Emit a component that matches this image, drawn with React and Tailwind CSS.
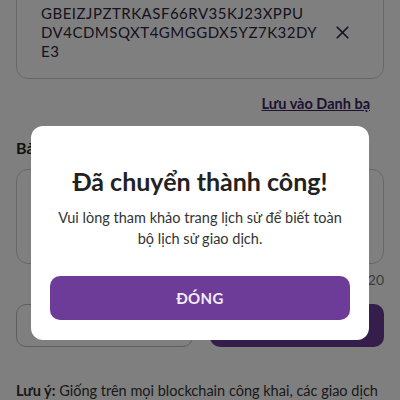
import React from 'react';
import { X } from 'lucide-react';

const font = { fontFamily: 'Lato, "Noto Sans", sans-serif' };

const SuccessModal = () => (
    <div className="fixed inset-0 bg-black/50 flex items-start justify-center">
        <div className="mt-[126px] w-[338px] bg-white rounded-[12px] pt-[39px] pb-[20px] px-[19px] flex flex-col items-center">
            <h2 className="text-[25px] leading-[32px] font-bold text-[#222]">Đã chuyển thành công!</h2>
            <p className="mt-[10px] text-center text-[14.5px] leading-[21px] whitespace-nowrap text-[#333]">
                Vui lòng tham khảo trang lịch sử để biết toàn
                <br />
                bộ lịch sử giao dịch.
            </p>
            <button className="mt-[27px] w-full h-[44px] rounded-[10px] bg-[#6c3c98] text-[#f3ecf7] text-[15px] font-bold tracking-wide">
                ĐÓNG
            </button>
        </div>
    </div>
);

export default function App() {
    return (
        <div className="relative w-[400px] h-[400px] overflow-hidden bg-white" style={font}>
            <div className="px-4">
                {/* address box, scrolled partly out of view */}
                <div className="-mt-[20px] border border-[#cfcfd4] rounded-[12px] pt-[23px] pb-[17px] pl-[24px] pr-[30px] flex items-center justify-between">
                    <div className="text-[15px] leading-[19px] text-[#2e2640] tracking-[0.5px]">
                        GBEIZJPZTRKASF66RV35KJ23XPPU
                        <br />
                        DV4CDMSQXT4GMGGDX5YZ7K32DY
                        <br />
                        E3
                    </div>
                    <X size={21} strokeWidth={2} className="text-[#2e2640]" />
                </div>
                <div className="flex justify-end pr-[14px] mt-[14px]">
                    <span className="text-[14.5px] font-bold underline text-[#3a2560]">Lưu vào Danh bạ</span>
                </div>
                <div className="mt-[21px] text-[16px] font-bold text-[#1f1f1f]">Bản ghi nhớ</div>
                <div className="mt-[9px] h-[95px] border border-[#cfcfd4] rounded-[12px]"></div>
                <div className="mt-[5px] text-right text-[14px] text-[#777]">0/120</div>
                <div className="mt-[14px] flex gap-[17px]">
                    <button className="flex-1 h-[43px] border border-[#bdbdbd] rounded-[10px] text-[15px] font-bold text-[#6c3c98]">Hủy</button>
                    <button className="flex-1 h-[43px] rounded-[10px] bg-[#6c3c98] text-[15px] font-bold text-white">Tiếp tục</button>
                </div>
                <p className="mt-[33px] text-[14.5px] leading-[21px] whitespace-nowrap text-[#333]">
                    <span className="font-bold">Lưu ý:</span> Giống trên mọi blockchain công khai, các giao dịch
                </p>
            </div>
            <SuccessModal />
        </div>
    );
}
